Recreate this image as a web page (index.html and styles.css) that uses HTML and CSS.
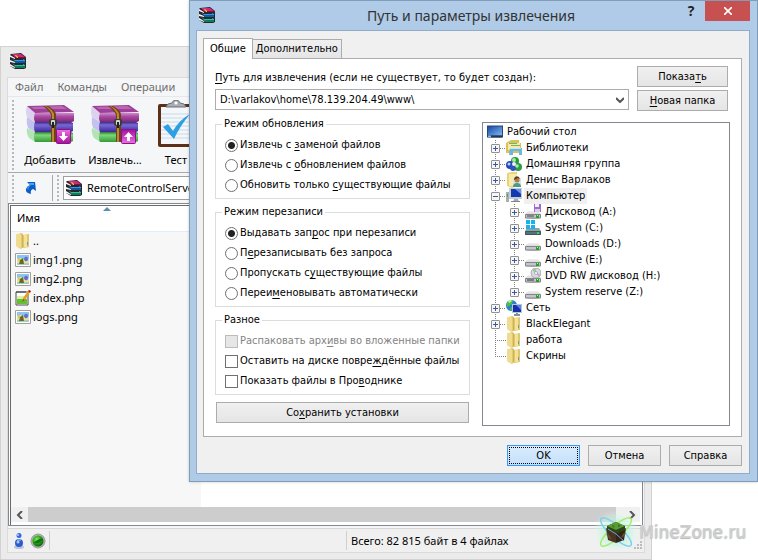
FILE: index.html
```html
<!DOCTYPE html>
<html lang="ru">
<head>
<meta charset="utf-8">
<title>Путь и параметры извлечения</title>
<link rel="stylesheet" href="styles.css">
</head>
<body>
<svg class="sprite" aria-hidden="true">
  <defs>
    <linearGradient id="gPurple" x1="0" y1="0" x2="0" y2="1"><stop offset="0" stop-color="#d088cc"/><stop offset=".4" stop-color="#a84aa2"/><stop offset="1" stop-color="#7a2a76"/></linearGradient>
    <linearGradient id="gBlue" x1="0" y1="0" x2="0" y2="1"><stop offset="0" stop-color="#3a2a86"/><stop offset=".3" stop-color="#7a68d6"/><stop offset="1" stop-color="#3a2896"/></linearGradient>
    <linearGradient id="gGreen" x1="0" y1="0" x2="0" y2="1"><stop offset="0" stop-color="#2b7a30"/><stop offset=".3" stop-color="#7ed67c"/><stop offset="1" stop-color="#339c34"/></linearGradient>
    <linearGradient id="gFolder" x1="0" y1="0" x2="1" y2="0"><stop offset="0" stop-color="#f6e7a0"/><stop offset=".5" stop-color="#e9d27a"/><stop offset="1" stop-color="#d2b04c"/></linearGradient>
    <linearGradient id="gBadge" x1="0" y1="0" x2="0" y2="1"><stop offset="0" stop-color="#ee6fe4"/><stop offset="1" stop-color="#a3109b"/></linearGradient>
    <linearGradient id="gScreen" x1="0" y1="0" x2="1" y2="1"><stop offset="0" stop-color="#1848a8"/><stop offset="1" stop-color="#7fb8f0"/></linearGradient>
    <linearGradient id="gDrive" x1="0" y1="0" x2="0" y2="1"><stop offset="0" stop-color="#f0f0f2"/><stop offset="1" stop-color="#b8b8be"/></linearGradient>
    <radialGradient id="gBall" cx=".4" cy=".35" r=".7"><stop offset="0" stop-color="#7af05a"/><stop offset=".5" stop-color="#2aa51c"/><stop offset="1" stop-color="#0c5a08"/></radialGradient>
    <radialGradient id="gGlow"><stop offset="0" stop-color="#a8f0c0" stop-opacity=".9"/><stop offset=".6" stop-color="#c4f4e0" stop-opacity=".6"/><stop offset="1" stop-color="#e4fbf4" stop-opacity="0"/></radialGradient>

    <symbol id="books" viewBox="0 0 16 16">
      <path d="M1 1 11 0l5 4v11l-2 1H5l-5-3V2z" fill="#26262e"/>
      <path d="M2 1h9l4 3H5z" fill="#d02a76"/><path d="M5 4h11v1H5z" fill="#8d0d4a"/>
      <path d="M0 2 5 5v1L0 4zM0 7l5 2v1L0 9zM0 11l5 3v1l-5-2z" fill="#f4f4f4"/>
      <path d="m2 6 3 2h10V7L13 6v1H5z" fill="#2d9be0"/><path d="M5 8h10v2H5z" fill="#12589f"/>
      <path d="m2 10 3 3h10v-1l-2-1v1H5z" fill="#36c09a"/><path d="M5 13h10v2H5z" fill="#0d7d5c"/>
      <path d="M5 2h1l2 2v1H7z" fill="#f0c430"/>
    </symbol>

    <symbol id="archive" viewBox="0 0 48 38">
      <path d="M1 23 9 27v10L3 33q-3-5-2-10z" fill="#b4e4b6"/><path d="M9 27h36l2 1v8l-2 1H9q-2-5 0-10z" fill="url(#gGreen)"/>
      <path d="M1 12 9 17v10l-7-4q-2-5-1-11z" fill="#c3c2ee"/><path d="M9 17h36l2 1v8l-2 1H9q-2-5 0-10z" fill="url(#gBlue)"/>
      <path d="M1 1 9 8v9L1 12q-2-5 0-11z" fill="#dcd2ee"/><path d="M1 1 38 0l10 7-39 1z" fill="#9c4098"/><path d="M5 2 36 1l5 3H8z" fill="#bb66b5"/>
      <path d="M9 8h39v8l-2 1H9q-2-4 0-9z" fill="url(#gPurple)"/>
      <path d="M17 1h5q7 4 8 8v28h-5V10q-2-5-8-9z" fill="#6b4418"/><path d="M19 1h1q7 4 8 8v28h-2V10q-1-5-7-9z" fill="#bd8738"/>
      <rect x="23" y="14" width="8" height="7" rx="2" fill="#3c3c3c"/><rect x="25" y="15" width="4" height="5" rx="1" fill="#d8d8c8"/><path d="M26 17h2v6h-2z" fill="#222"/>
    </symbol>

    <symbol id="badge" viewBox="0 0 15 15">
      <rect x=".5" y=".5" width="14" height="14" rx="1" fill="url(#gBadge)" stroke="#8c1187"/>
      <path d="M6 3h3v4h3l-4.500 5L3 7h3z" fill="#fff"/>
    </symbol>

    <symbol id="test" viewBox="0 0 40 48">
      <rect x="1" y="4" width="38" height="43" rx="2" fill="#5c2f16"/><rect x="4" y="7" width="32" height="37" fill="#f4f7fa"/>
      <path d="M4 14h32M4 18h32M4 22h32M4 26h32M4 30h32M4 34h32M4 38h32" stroke="#c9d9e8"/>
      <path d="M9 7q1-4 6-4 1-3 4-3t4 3q5 0 6 4z" fill="#aaaeb4" stroke="#6b7078"/><circle cx="19" cy="3" r="1.500" fill="#fff"/>
      <path d="m6 27 5-3 5 7Q22 20 33 14 23 26 17 39z" fill="#2f9fe4"/>
    </symbol>

    <symbol id="folder" viewBox="0 0 16 16">
      <path d="M2 1 6 0l2 1v13l-2 2-4-2z" fill="url(#gFolder)"/><path d="m8 2 6-1v13l-6 1z" fill="#e3c765"/>
      <path d="M1 1h4l2 1v13l-5-1-1-1z" fill="#f0dc8e"/><path d="M7 2v13" stroke="#c9ac54" stroke-width=".8"/><path d="M9 2h3v12H9z" fill="#f3e29a"/>
      <path d="M12 9h1v3h-1z" fill="#58a0d8"/>
    </symbol>

    <symbol id="image" viewBox="0 0 16 14">
      <path d="M.5.5h15v13H.5z" fill="#fff" stroke="#a0a0a0"/><path d="M2 2h12v5H2z" fill="#8cc4f0"/>
      <path d="M2 6q3-2 6 0t6 0v4H2z" fill="#dce8a0"/><path d="M2 10h12v2H2z" fill="#b8c4c0"/><path d="M10 4q3-1 3 2t-3 2q-2-2 0-4z" fill="#6d6bd0"/>
      <path d="M3 5h2v3H3z" fill="#f0c070"/><path d="m4 11 1-4 3-2 1 6z" fill="#2a8e22"/><path d="M6 7h2v3H6z" fill="#d23020"/>
    </symbol>

    <symbol id="php" viewBox="0 0 16 16">
      <path d="M1 2h12v13H1z" fill="#fff" stroke="#4a4a4a"/><path d="M2 8h10v6H2z" fill="#66c22a"/><path d="M2 6h10v3H2z" fill="#d8f0a8"/>
      <path d="M2 1v2M4 1v2M6 1v2M8 1v2M10 1v2" stroke="#333" stroke-width=".9"/><path d="m7 11 1-3 5-7 2 1-5 8z" fill="#e8a020"/><path d="m13 1 1-1 2 1-1 2z" fill="#b01010"/><path d="m7 12 1-3 2 1z" fill="#664"/>
    </symbol>

    <symbol id="up" viewBox="0 0 14 14">
      <path d="M3 1h8l1 9-3-2q-3 1-2 5Q1 12 2 8q1-3 4-4z" fill="#0d5cc8"/><path d="M4 2h6v2H7Q4 6 4 9 2 7 6 4z" fill="#3fa4f4"/>
    </symbol>

    <symbol id="desktop" viewBox="0 0 16 13">
      <path d="M0 0h16v12H0z" fill="#274777"/><path d="M1 1h14v9H1z" fill="url(#gScreen)"/><path d="M1 10h14v2H1z" fill="#25355a"/><path d="M1 10h3v2H1z" fill="#7cc0e8"/>
    </symbol>
    <symbol id="library" viewBox="0 0 16 16">
      <path d="M0 3 5 0h8v3h2v10H0z" fill="#dfbf58"/><path d="M2 3h12v7H2z" fill="#f8e9a8"/><path d="M5 5h9v1H5zM3 3h8v1H3z" fill="#69b96a"/>
      <path d="M4 8h12v7h-3v-4H7v4H3z" fill="#68b7e4"/><path d="M4 8h11v1H4z" fill="#bfe7fa"/>
    </symbol>
    <symbol id="home" viewBox="0 0 16 16">
      <circle cx="9" cy="5" r="4" fill="#249a36"/><circle cx="4" cy="9" r="4" fill="#2848b8"/><circle cx="12" cy="11" r="4" fill="#2b9c40"/><circle cx="7" cy="12" r="3" fill="#3152b8"/>
      <circle cx="8" cy="4" r="2" fill="#a8e8a0"/><circle cx="3" cy="8" r="1.500" fill="#b6d0ff"/><circle cx="11" cy="10" r="1.800" fill="#aee4b8"/><circle cx="8" cy="8" r="2" fill="#e4f0ff"/>
    </symbol>
    <symbol id="user" viewBox="0 0 16 16">
      <path d="M1 1 6 0h5v14l-5 2-5-2z" fill="#e9d27a"/><path d="M3 2h8v12H3z" fill="#f8eba8"/>
      <path d="M7 6h8v9H7z" fill="#d8e4d8"/><circle cx="11" cy="8" r="2.500" fill="#b97848"/><path d="M8 7q1-4 5-2l1 2-2-1-4 2z" fill="#5d3c24"/><path d="M7 15q0-4 4-4t4 4z" fill="#4a9a84"/>
    </symbol>
    <symbol id="computer" viewBox="0 0 16 16">
      <path d="M0 4h3v10H0z" fill="#a8aeb4"/><path d="M1 6h1v3H1z" fill="#43b04a"/><path d="M3 0h13v11H3z" fill="#c6ccd4"/><path d="M5 1h10v8H5z" fill="#1438b0"/><path d="M9 1h6v5z" fill="#6b94ec"/><path d="M8 11h4l1 3H7z" fill="#a3abb2"/><path d="M5 13h9v1H5z" fill="#7d858c"/>
    </symbol>
    <symbol id="drive" viewBox="0 0 16 16">
      <path d="M3 7h10l3 3v4q-8 2-16 0v-4z" fill="url(#gDrive)"/><path d="M.5 10.500h15v3.500H.5z" fill="#c4c5ca" stroke="#85868c"/><path d="M11 11h3v3h-3z" fill="#20a820"/><path d="M12 11h1v1h-1z" fill="#baff9a"/>
    </symbol>
    <symbol id="floppy" viewBox="0 0 16 16">
      <use href="#drive"/><path d="M9 0h7v8H9z" fill="#9a70c0"/><path d="M10 0h4v3h-4z" fill="#f4ecff"/><path d="M10 5h5v3h-5z" fill="#dccdf0"/><path d="M2 12h7" stroke="#444"/>
    </symbol>
    <symbol id="system" viewBox="0 0 16 16">
      <path d="m2 8 12 0 2 3v4H0v-4z" fill="#8fa4a8"/><path d="M.5 11.500h15v3H.5z" fill="#50747c" stroke="#44565c"/><path d="M12 12h2v2h-2z" fill="#3ed060"/>
      <path d="M1 0h4v4H1zM6 0h4v4H6zM1 5h4v4H1zM6 5h4v4H6z" fill="#16b4ee"/>
    </symbol>
    <symbol id="dvd" viewBox="0 0 16 16">
      <use href="#drive"/><circle cx="11" cy="5" r="5" fill="#d9dadd" stroke="#9a9ba0" stroke-width=".8"/><path d="M11 0v5L7 2z" fill="#98cc9a"/><path d="m11 5 3 4 1-3z" fill="#b7a9d8"/><circle cx="11" cy="5" r="1.500" fill="#fff" stroke="#888" stroke-width=".6"/><path d="M2 12h7" stroke="#333"/>
    </symbol>
    <symbol id="network" viewBox="0 0 16 16">
      <circle cx="5.500" cy="5.500" r="5.500" fill="#2d80d0"/><path d="M1 3q4-4 6-2l-1 3-3 2-2 1zM5 7l3 1-1 3-3-1z" fill="#4cc23c"/><path d="M2 1q3-2 4 0L3 3z" fill="#c4f0a8"/>
      <path d="M6 4h10v9H6z" fill="#b8c4d8"/><path d="M7 5h8v7H7z" fill="#1530a8"/><path d="m10 5 5 0v5z" fill="#5e82e0"/><path d="M10 13h2v1h2v2H8v-2h2z" fill="#84909c"/>
    </symbol>
  </defs>
</svg>

<main class="desktop">
  <section class="window" aria-label="WinRAR">
    <header class="window-title"><svg class="ico"><use href="#books"/></svg></header>
    <div class="window-body">
      <nav class="menu"><button>Файл</button><button>Команды</button><button>Операции</button></nav>
      <div class="toolbar">
        <span class="grip"></span>
        <button class="tool"><svg class="tool-icon" viewBox="0 0 48 48"><use href="#archive" x="0" y="5" width="48" height="38"/><use href="#badge" x="30" y="29" width="15" height="15"/></svg>Добавить</button>
        <button class="tool"><svg class="tool-icon" viewBox="0 0 48 48"><use href="#archive" x="0" y="5" width="48" height="38"/><use href="#badge" x="30" y="29" width="15" height="15" transform="rotate(180 37.500 36.500)"/></svg>Извлечь...</button>
        <button class="tool narrow"><svg class="tool-icon" viewBox="0 0 48 48"><use href="#test" x="5" y="0" width="40" height="48"/></svg>Тест</button>
      </div>
      <div class="address">
        <span class="grip"></span>
        <button class="up" aria-label="Вверх"><svg class="up-icon"><use href="#up"/></svg></button>
        <span class="grip"></span>
        <label class="path"><svg class="ico"><use href="#books"/></svg><input type="text" value="RemoteControlServer" aria-label="Адрес"></label>
      </div>
      <div class="list">
        <div class="files">
          <span class="sort"></span>
          <table>
            <thead><tr><th scope="col">Имя</th></tr></thead>
            <tbody>
              <tr><td><span class="file"><svg class="ico"><use href="#folder"/></svg>..</span></td></tr>
              <tr><td><span class="file"><svg class="ico"><use href="#image"/></svg>img1.png</span></td></tr>
              <tr><td><span class="file"><svg class="ico"><use href="#image"/></svg>img2.png</span></td></tr>
              <tr><td><span class="file"><svg class="ico"><use href="#php"/></svg>index.php</span></td></tr>
              <tr><td><span class="file"><svg class="ico"><use href="#image"/></svg>logs.png</span></td></tr>
            </tbody>
          </table>
        </div>
        <div class="scroll">
          <button aria-label="Влево"><svg viewBox="0 0 8 8"><path d="M6 0 2 4l4 4" fill="none" stroke="#555" stroke-width="2"/></svg></button>
          <span class="thumb"></span>
          <button aria-label="Вправо"><svg viewBox="0 0 8 8"><path d="m2 0 4 4-4 4" fill="none" stroke="#555" stroke-width="2"/></svg></button>
        </div>
      </div>
      <footer class="status">
        <span class="status-icons">
          <svg viewBox="0 0 12 16"><ellipse cx="6" cy="14" rx="5" ry="2" fill="#b8c4dc"/><circle cx="6" cy="10" r="4" fill="#2c5ccc"/><circle cx="6" cy="2.500" r="2.500" fill="#3568d8"/><path d="M4 6h4v2H4z" fill="#6f98e8"/><circle cx="5" cy="9" r="1.500" fill="#a8c8ff"/><circle cx="5" cy="2" r="1" fill="#b8d2ff"/></svg>
          <svg viewBox="0 0 16 16"><circle cx="8" cy="8" r="7" fill="#b0b4b0" stroke="#989c98"/><circle cx="8" cy="8" r="5.500" fill="url(#gBall)"/><path d="M4 10q5-5 9-4-3 5-9 4z" fill="#127010"/></svg>
        </span>
        <span class="status-main"></span>
        <span class="status-total">Всего: 82 815 байт в 4 файлах</span>
        <svg class="resize" viewBox="0 0 9 9"><path d="M6 0h2v2H6zM3 3h2v2H3zM6 3h2v2H6zM0 6h2v2H0zM3 6h2v2H3zM6 6h2v2H6z" fill="#bcbcbc"/></svg>
      </footer>
    </div>
  </section>

  <section class="dialog" role="dialog" aria-labelledby="dialog-title">
    <header class="dialog-title">
      <svg class="ico"><use href="#books"/></svg>
      <h1 id="dialog-title">Путь и параметры извлечения</h1>
      <button class="help" aria-label="Справка по окну">?</button>
      <button class="close" aria-label="Закрыть"><svg viewBox="0 0 8 8"><path d="m0 0 8 8M8 0 0 8" stroke="#fff" stroke-width="1.600"/></svg></button>
    </header>
    <form class="dialog-body">
      <div class="tabs" role="tablist"><button type="button" role="tab" class="tab active" aria-selected="true">Общие</button><button type="button" role="tab" class="tab" aria-selected="false">Дополнительно</button></div>
      <div class="panel" role="tabpanel">
        <div class="dest">
          <div class="dest-field">
            <label for="dest"><u>П</u>уть для извлечения (если не существует, то будет создан):</label>
            <div class="combo">
              <select id="dest"><option>D:\varlakov\home\78.139.204.49\www\</option></select>
              <svg viewBox="0 0 8 6"><path d="m0 1 4 4 4-4" fill="none" stroke="#555" stroke-width="2"/></svg>
            </div>
          </div>
          <div class="dest-actions"><button type="button" class="btn">Показа<u>т</u>ь</button><button type="button" class="btn"><u>Н</u>овая папка</button></div>
        </div>
        <div class="columns">
          <div class="options">
            <fieldset><legend>Режим обновления</legend>
              <label class="opt"><input type="radio" name="update" checked><span>Извлечь с <u>з</u>аменой файлов</span></label>
              <label class="opt"><input type="radio" name="update"><span>Извлечь с <u>о</u>бновлением файлов</span></label>
              <label class="opt"><input type="radio" name="update"><span>Обновить только <u>с</u>уществующие файлы</span></label>
            </fieldset>
            <fieldset><legend>Режим перезаписи</legend>
              <label class="opt"><input type="radio" name="overwrite" checked><span>Выдавать зап<u>р</u>ос при перезаписи</span></label>
              <label class="opt"><input type="radio" name="overwrite"><span>П<u>е</u>резаписывать без запроса</span></label>
              <label class="opt"><input type="radio" name="overwrite"><span>Пропускать с<u>у</u>ществующие файлы</span></label>
              <label class="opt"><input type="radio" name="overwrite"><span>Переи<u>м</u>еновывать автоматически</span></label>
            </fieldset>
            <fieldset><legend>Разное</legend>
              <label class="opt disabled"><input type="checkbox" disabled><span>Распаковать арх<u>и</u>вы во вложенные папки</span></label>
              <label class="opt"><input type="checkbox"><span>Оставить на диске повре<u>ж</u>дённые файлы</span></label>
              <label class="opt"><input type="checkbox"><span>Показать файлы в Про<u>в</u>однике</span></label>
            </fieldset>
            <button type="button" class="btn save">Со<u>х</u>ранить установки</button>
          </div>
          <div class="tree">
            <div class="root"><svg class="ico"><use href="#desktop"/></svg>Рабочий стол</div>
            <ul>
              <li><div class="node"><button type="button" class="exp" aria-label="Развернуть"></button><svg class="ico"><use href="#library"/></svg><span>Библиотеки</span></div></li>
              <li><div class="node"><button type="button" class="exp" aria-label="Развернуть"></button><svg class="ico"><use href="#home"/></svg><span>Домашняя группа</span></div></li>
              <li><div class="node"><button type="button" class="exp" aria-label="Развернуть"></button><svg class="ico"><use href="#user"/></svg><span>Денис Варлаков</span></div></li>
              <li><div class="node"><button type="button" class="exp open" aria-label="Свернуть"></button><svg class="ico"><use href="#computer"/></svg><span class="selected">Компьютер</span></div>
                <ul>
                  <li><div class="node"><button type="button" class="exp" aria-label="Развернуть"></button><svg class="ico"><use href="#floppy"/></svg><span>Дисковод (A:)</span></div></li>
                  <li><div class="node"><button type="button" class="exp" aria-label="Развернуть"></button><svg class="ico"><use href="#system"/></svg><span>System (C:)</span></div></li>
                  <li><div class="node"><button type="button" class="exp" aria-label="Развернуть"></button><svg class="ico"><use href="#drive"/></svg><span>Downloads (D:)</span></div></li>
                  <li><div class="node"><button type="button" class="exp" aria-label="Развернуть"></button><svg class="ico"><use href="#drive"/></svg><span>Archive (E:)</span></div></li>
                  <li><div class="node"><button type="button" class="exp" aria-label="Развернуть"></button><svg class="ico"><use href="#dvd"/></svg><span>DVD RW дисковод (H:)</span></div></li>
                  <li><div class="node"><button type="button" class="exp" aria-label="Развернуть"></button><svg class="ico"><use href="#drive"/></svg><span>System reserve (Z:)</span></div></li>
                </ul>
              </li>
              <li><div class="node"><button type="button" class="exp" aria-label="Развернуть"></button><svg class="ico"><use href="#network"/></svg><span>Сеть</span></div></li>
              <li><div class="node"><button type="button" class="exp" aria-label="Развернуть"></button><svg class="ico"><use href="#folder"/></svg><span>BlackElegant</span></div></li>
              <li><div class="node"><span class="leaf"></span><svg class="ico"><use href="#folder"/></svg><span>работа</span></div></li>
              <li><div class="node"><span class="leaf"></span><svg class="ico"><use href="#folder"/></svg><span>Скрины</span></div></li>
            </ul>
          </div>
        </div>
      </div>
      <div class="actions"><button type="button" class="btn default">OK</button><button type="button" class="btn">Отмена</button><button type="button" class="btn">Справка</button></div>
    </form>
  </section>

  <div class="watermark">
    <svg viewBox="0 0 48 44">
      <ellipse cx="24" cy="22" rx="24" ry="22" fill="url(#gGlow)"/>
      <g fill="none" stroke-width="1.500"><ellipse cx="24" cy="22" rx="20" ry="6" transform="rotate(42 24 22)" stroke="#7cd0f0"/><ellipse cx="24" cy="22" rx="20" ry="6" transform="rotate(-42 24 22)" stroke="#a2ee68"/></g>
      <path d="m14 18 10 5v10l-8-3z" fill="#4a3324"/><path d="m34 18-10 5v10l8-3z" fill="#33241a"/><path d="m15 16 9-4 9 4v4l-9 4-9-4z" fill="#2c4418"/><path d="m15 16 9-4 9 4-9 4z" fill="#5c9a34"/><path d="m20 15 3 1-2 2zM26 14l3 2-3 1z" fill="#3f7424"/>
      <path d="m15 24 4 5M30 27l3-4" stroke="#6d4a30" stroke-width="2"/><path d="M16 19q8 4 16 12" stroke="#6aa8d0" stroke-width="1" fill="none"/>
    </svg>
    <span>MineZone.ru</span>
  </div>
</main>
</body>
</html>
```

FILE: styles.css
```css
* { box-sizing: border-box; }

body {
  margin: 0;
  background: #fff;
  color: #000;
  font: 11px/16px "Noto Sans", "Open Sans", sans-serif;
}

button, input, select { font: inherit; color: inherit; }
button { padding: 0; border: 0; background: none; }
.sprite { position: absolute; width: 0; height: 0; }
.ico { width: 16px; height: 16px; flex: none; display: block; }
u { text-underline-offset: 2px; text-decoration-skip-ink: none; }

.desktop { position: relative; min-height: 100vh; overflow: hidden; }

/* Archive manager window */
.window {
  position: absolute;
  inset: 46px 106px 0 0;
  display: flex;
  flex-direction: column;
  padding: 0 6px 6px;
  border: 1px solid #d2d2d2;
  background: #ebebeb;
}
.window-title { height: 30px; padding: 6px 3px; }
.window-body {
  flex: 1;
  display: flex;
  flex-direction: column;
  border: 1px solid #dadada;
  background: #f5f6f7;
}
.menu { display: flex; gap: 14px; height: 19px; padding: 0 7px; border-bottom: 1px solid #e6e7e8; color: #6d6d6d; }
.toolbar { display: flex; height: 76px; padding: 3px 4px 0; border-bottom: 1px solid #a9a9a9; }
.grip { flex: none; width: 2px; align-self: stretch; background: repeating-linear-gradient(#b8b8b8 0 2px, transparent 2px 4px); }
.tool { display: flex; flex-direction: column; align-items: center; width: 64px; margin-left: 1px; }
.tool:nth-of-type(1) { margin-left: 4px; }
.tool.narrow { width: 56px; }
.tool-icon { width: 48px; height: 48px; margin-bottom: 4px; }
.address { display: flex; align-items: center; height: 30px; padding: 2px 4px; }
.up { align-self: stretch; width: 39px; padding: 0 10px; border-right: 1px solid #a9a9a9; }
.up + .grip { margin-left: 4px; }
.up-icon { display: block; width: 14px; height: 14px; }
.path { flex: 1; display: flex; align-items: center; gap: 5px; height: 24px; margin-left: 4px; padding-left: 2px; border: 1px solid #a0a0a0; background: #fff; }
.path input { flex: 1; min-width: 0; padding: 0; border: 0; outline: 0; background: none; }

.list { flex: 1; display: flex; flex-direction: column; margin-right: 1px; border: 1px solid #828790; box-shadow: inset 1px 1px #fff, inset 2px 2px #696969; padding: 2px 2px 3px; background: #fff; }
.files { position: relative; flex: 1; background: linear-gradient(90deg, #f7f7f7 190px, #fff 190px); }
.files table { width: 100%; border-collapse: collapse; }
.files th { height: 25px; padding: 0 6px; border-bottom: 1px solid #e2ecf6; background: #fff; text-align: left; font-weight: normal; }
.files td { height: 19px; padding: 0; }
.file { display: flex; align-items: center; gap: 2px; padding-left: 4px; }
.sort { position: absolute; left: 92px; top: 1px; border: solid transparent; border-width: 0 4px 4px; border-bottom-color: #5f8ca6; }
.scroll { display: flex; height: 15px; background: #f0f0f0; }
.scroll button { width: 17px; display: grid; place-items: center; }
.scroll button:last-child { width: 24px; padding-left: 7px; }
.scroll svg { width: 8px; height: 8px; }
.thumb { flex: 1; background: #cdcdcd; }

.status { display: flex; align-items: center; height: 24px; margin-top: 2px; padding: 2px 0; border-top: 1px solid #d7d7d7; background: #f0f0f0; }
.status-icons { display: flex; align-items: center; gap: 5px; width: 42px; height: 100%; padding-left: 5px; border-right: 1px solid #d0d0d0; }
.status-icons svg { height: 16px; width: 16px; flex: none; }
.status-icons svg:first-child { width: 12px; }
.status-main { flex: 1; height: 100%; border-right: 1px solid #d0d0d0; }
.status-total { width: 287px; padding-left: 4px; }
.resize { width: 9px; height: 9px; align-self: flex-end; margin-right: 1px; }

/* Extraction dialog */
.dialog {
  position: absolute;
  inset: 0 0 auto 189px;
  padding: 0 7px 7px 6px;
  border: 1px solid #7f9db9;
  background: #b0cbe8;
  box-shadow: 0 0 3px rgba(0, 0, 0, .2);
  font: 11px/14px "DejaVu Sans Condensed", "DejaVu Sans", sans-serif;
}
.dialog-title { display: flex; align-items: flex-start; height: 29px; padding-left: 3px; }
.dialog-title .ico { margin-top: 6px; }
.dialog-title h1 { flex: 1; margin: 0 0 0 50px; font: 14px/30px "Noto Sans", "Open Sans", sans-serif; color: #333; text-align: center; }
.help { width: 28px; height: 20px; font: bold 14px/20px "Open Sans", sans-serif; color: #222; }
.close { width: 45px; height: 20px; background: #c75050; display: grid; place-items: center; }
.close svg { width: 8px; height: 8px; }
.dialog-body { padding: 7px 7px 7px 6px; border: 1px solid #90acc8; background: #f0f0f0; }

.tabs { display: flex; align-items: flex-end; }
.tab { height: 19px; padding: 0 3px; border: 1px solid #acacac; border-width: 1px 1px 0 0; background: linear-gradient(#f0f0f0, #e5e5e5); }
.tab.active { height: 21px; margin-bottom: -1px; padding: 0 6px 1px; border-left-width: 1px; background: #fff; }
.panel { padding: 7px 11px 10px; border: 1px solid #acacac; background: #fff; }

.btn { height: 21px; border: 1px solid #acacac; background: linear-gradient(#f0f0f0, #e5e5e5); }
.dest { display: flex; gap: 8px; padding-right: 2px; }
.dest-field { flex: 1; display: flex; flex-direction: column; justify-content: space-between; padding: 5px 0 1px; }
.combo { display: flex; align-items: center; height: 21px; padding-right: 4px; border: 1px solid #acacac; }
.combo select { flex: 1; height: 19px; padding: 0 4px; border: 0; outline: 0; background: none; appearance: none; }
.combo svg { width: 8px; height: 6px; }
.dest-actions { display: flex; flex-direction: column; gap: 3px; width: 91px; }

.columns { display: flex; gap: 12px; margin-top: 6px; }
.options { display: flex; flex-direction: column; gap: 6px; width: 255px; }
fieldset { min-width: 0; margin: 0; padding: 4px 9px 3px; border: 1px solid #dcdcdc; }
legend { margin-left: -3px; padding: 0 2px; height: 14px; }
.opt { display: flex; align-items: center; gap: 2px; height: 20px; white-space: nowrap; }
.opt input { flex: none; width: 13px; height: 13px; margin: 0; border: 1px solid #707070; background: #fff; appearance: none; }
.opt input[type="radio"] { border-radius: 50%; }
.opt input[type="radio"]:checked { background: radial-gradient(circle, #222 3px, #fff 4px); }
.opt.disabled { color: #838383; }
.opt input:disabled { border-color: #bcbcbc; background: #e6e6e6; }
.save { margin: 1px 1px 3px; }

.tree { flex: 1; margin-top: 5px; padding: 1px 4px; border: 1px solid #828790; }
.tree .root, .node { display: flex; align-items: center; height: 16px; white-space: nowrap; }
.tree .root { gap: 4px; }
.tree ul { margin: 0; padding: 0; list-style: none; }
.tree li { position: relative; padding-left: 4px; }
.tree li li { padding-left: 0; }
.tree li > ul { padding-left: 19px; }
.tree li::before {
  content: "";
  position: absolute;
  left: 8px;
  top: 0;
  bottom: 0;
  width: 1px;
  background: repeating-linear-gradient(#808080 0 1px, transparent 1px 2px);
}
.tree li li::before { left: 4px; }
.tree li:last-child::before { bottom: auto; height: 8px; }
.node { position: relative; }
.exp, .leaf { flex: none; position: relative; width: 9px; height: 9px; margin-right: 6px; }
.exp { border: 1px solid #919191; border-radius: 1px; background: linear-gradient(#3c5a9c, #3c5a9c) center / 5px 1px no-repeat, linear-gradient(#3c5a9c, #3c5a9c) center / 1px 5px no-repeat, #f6f6f6; }
.exp.open { background: linear-gradient(#3c5a9c, #3c5a9c) center / 5px 1px no-repeat, #f6f6f6; }
.exp::after, .leaf::after { content: ""; position: absolute; left: 8px; top: 3px; width: 6px; height: 1px; background: repeating-linear-gradient(90deg, #808080 0 1px, transparent 1px 2px); }
.leaf::after { left: 4px; top: 4px; width: 11px; }
.node > span:last-child { padding: 0 2px; margin-left: 2px; }
.node .selected { line-height: 16px; background: #f0f0f0; }

.actions { display: flex; justify-content: flex-end; gap: 8px; margin-top: 8px; }
.actions .btn { width: 73px; }
.btn.default { border-color: #3399ff; background: linear-gradient(#daecfc, #c4e0fc); outline: 1px dotted #000; outline-offset: -3px; }

.watermark { position: absolute; right: 12px; bottom: 6px; display: flex; align-items: center; }
.watermark svg { width: 48px; height: 44px; }
.watermark span { font: 17px/20px "DejaVu Sans", sans-serif; color: #d0d0d0; text-shadow: 0 1px 1px #b4b4b4, 1px 0 #dcdcdc; margin-left: -1px; }
```
